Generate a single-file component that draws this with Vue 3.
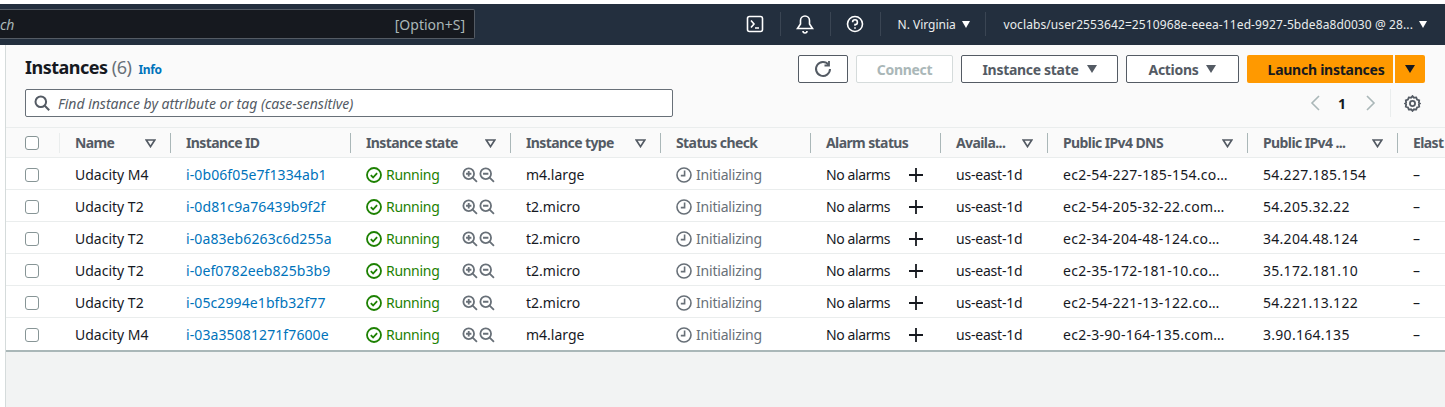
<script setup>
const columns = [
  { label: "Name", sort: true },
  { label: "Instance ID" },
  { label: "Instance state", sort: true },
  { label: "Instance type", sort: true },
  { label: "Status check" },
  { label: "Alarm status" },
  { label: "Availa...", sort: true },
  { label: "Public IPv4 DNS", sort: true },
  { label: "Public IPv4 ...", sort: true },
  { label: "Elast" },
];

const rows = [
  { name: "Udacity M4", id: "i-0b06f05e7f1334ab1", type: "m4.large", dns: "ec2-54-227-185-154.co…", ip: "54.227.185.154" },
  { name: "Udacity T2", id: "i-0d81c9a76439b9f2f", type: "t2.micro", dns: "ec2-54-205-32-22.com…", ip: "54.205.32.22" },
  { name: "Udacity T2", id: "i-0a83eb6263c6d255a", type: "t2.micro", dns: "ec2-34-204-48-124.co…", ip: "34.204.48.124" },
  { name: "Udacity T2", id: "i-0ef0782eeb825b3b9", type: "t2.micro", dns: "ec2-35-172-181-10.co…", ip: "35.172.181.10" },
  { name: "Udacity T2", id: "i-05c2994e1bfb32f77", type: "t2.micro", dns: "ec2-54-221-13-122.co…", ip: "54.221.13.122" },
  { name: "Udacity M4", id: "i-03a35081271f7600e", type: "m4.large", dns: "ec2-3-90-164-135.com…", ip: "3.90.164.135" },
];
</script>

<template>
  <div class="page">
    <header class="nav">
      <div class="search">
        <span class="search-text">ch</span>
        <span class="shortcut">[Option+S]</span>
      </div>
      <div class="nav-right">
        <span class="nav-icon">
          <svg width="18" height="18" viewBox="0 0 18 18" fill="none" stroke="#fff" stroke-width="1.6">
            <rect x="1.5" y="1.5" width="15" height="15" rx="2" />
            <path d="M5 5.5 8 9l-3 3.5M9 13h4" />
          </svg>
        </span>
        <span class="nav-icon">
          <svg width="18" height="20" viewBox="0 0 18 20" fill="none" stroke="#fff" stroke-width="1.6">
            <path d="M1.5 14.5h15L13.5 10V6.5a4.5 4.5 0 0 0-9 0V10zM7 17a2 2 0 0 0 4 0" />
          </svg>
        </span>
        <span class="nav-icon">
          <svg width="18" height="18" viewBox="0 0 18 18" fill="none" stroke="#fff" stroke-width="1.6">
            <circle cx="9" cy="9" r="7.5" />
            <path d="M6.6 7.2A2.4 2.4 0 1 1 9 9.6v1.2M9 12.2v1.6" />
          </svg>
        </span>
        <span class="region">N. Virginia <i class="tri tri-white"></i></span>
        <span class="account">voclabs/user2553642=2510968e-eeea-11ed-9927-5bde8a8d0030 @ 28... <i class="tri tri-white"></i></span>
      </div>
    </header>

    <main class="content">
      <section class="panel-head">
        <div class="head-top">
          <h1 class="title">Instances <span class="count">(6)</span><a class="info">Info</a></h1>
          <div class="actions">
            <button class="btn btn-icon">
              <svg width="18" height="18" viewBox="0 0 18 18" fill="none" stroke="#545b64" stroke-width="2">
                <path d="M14.5 4.6A7 7 0 1 0 16 9" />
                <path d="M15 1v4.5h-4.5" stroke-width="1.8" />
              </svg>
            </button>
            <button class="btn btn-disabled">Connect</button>
            <button class="btn btn-state">Instance state <i class="tri tri-gray"></i></button>
            <button class="btn btn-actions">Actions <i class="tri tri-gray"></i></button>
            <div class="launch">
              <button class="launch-main">Launch instances</button>
              <button class="launch-drop"><i class="tri tri-dark"></i></button>
            </div>
          </div>
        </div>
        <div class="head-bottom">
          <div class="filter">
            <svg width="16" height="16" viewBox="0 0 16 16" fill="none" stroke="#545b64" stroke-width="2">
              <circle cx="6.8" cy="6.8" r="5.3" />
              <path d="m10.8 10.8 4.4 4.4" />
            </svg>
            <span>Find instance by attribute or tag (case-sensitive)</span>
          </div>
          <div class="pager">
            <svg width="12" height="18" viewBox="0 0 12 18" fill="none" stroke="#aab7b8" stroke-width="1.6"><path d="M10 2 3 9l7 7" /></svg>
            <b>1</b>
            <svg class="next" width="12" height="18" viewBox="0 0 12 18" fill="none" stroke="#aab7b8" stroke-width="1.6"><path d="m2 2 7 7-7 7" /></svg>
            <span class="pager-sep"></span>
            <svg width="17" height="17" viewBox="0 0 16 16" fill="none" stroke="#545b64" stroke-width="1.7">
              <path d="m8 1 1.4 1.6 2.1-.3.8 2 2 .8-.3 2.1L15 8l-1 .8.3 2.1-2 .8-.8 2-2.1-.3L8 15l-1.4-1.6-2.1.3-.8-2-2-.8.3-2.1L1 8l1-.8-.3-2.1 2-.8.8-2 2.1.3z" />
              <circle cx="8" cy="8" r="2.4" />
            </svg>
          </div>
        </div>
      </section>

      <section class="table">
        <div class="row row-head">
          <div class="cell cell-check"><span class="checkbox"></span></div>
          <div v-for="col in columns" :key="col.label" class="cell cell-head">
            <span>{{ col.label }}</span>
            <svg v-if="col.sort" class="sort" width="11" height="9" viewBox="0 0 11 9" fill="none" stroke="#545b64" stroke-width="1.7"><path d="M1.2 1h8.6L5.5 7.6z" /></svg>
          </div>
        </div>
        <div v-for="row in rows" :key="row.id" class="row row-body">
          <div class="cell cell-check"><span class="checkbox"></span></div>
          <div class="cell">{{ row.name }}</div>
          <div class="cell link">{{ row.id }}</div>
          <div class="cell state">
            <svg width="16" height="16" viewBox="0 0 16 16" fill="none" stroke="#1d8102" stroke-width="1.8">
              <circle cx="8" cy="8" r="7" />
              <path d="m4.8 8.2 2.3 2.3 4-4.4" />
            </svg>
            <span class="running">Running</span>
            <span class="zoom">
              <svg width="16" height="16" viewBox="0 0 15 15" fill="none" stroke="#687078" stroke-width="1.7">
                <circle cx="6.3" cy="6.3" r="5" />
                <path d="m10 10 4 4M3.8 6.3h5M6.3 3.8v5" />
              </svg>
              <svg width="16" height="16" viewBox="0 0 15 15" fill="none" stroke="#687078" stroke-width="1.7">
                <circle cx="6.3" cy="6.3" r="5" />
                <path d="m10 10 4 4M3.8 6.3h5" />
              </svg>
            </span>
          </div>
          <div class="cell">{{ row.type }}</div>
          <div class="cell status">
            <svg width="16" height="16" viewBox="0 0 16 16" fill="none" stroke="#687078" stroke-width="1.6">
              <circle cx="8" cy="8" r="7" />
              <path d="M8.6 3.6v5H4.8" />
            </svg>
            <span class="status-text">Initializing</span>
          </div>
          <div class="cell alarm">
            <span class="alarm-text">No alarms</span>
            <svg width="16" height="16" viewBox="0 0 16 16" fill="none" stroke="#16191f" stroke-width="1.8"><path d="M8 1v14M1 8h14" /></svg>
          </div>
          <div class="cell zone">us-east-1d</div>
          <div class="cell wide">{{ row.dns }}</div>
          <div class="cell wide">{{ row.ip }}</div>
          <div class="cell">–</div>
        </div>
      </section>
      <div class="below"></div>
    </main>
  </div>
</template>

<style>
html,
body {
  margin: 0;
  background: #fff;
  overflow: hidden;
}
</style>

<style scoped>
.page {
  width: 1445px;
  height: 407px;
  overflow: hidden;
  font-family: "Noto Sans", "Open Sans", sans-serif;
  font-size: 14px;
  color: #16191f;
  padding-top: 4px;
  box-sizing: border-box;
  display: flex;
  flex-direction: column;
}
.nav {
  height: 41px;
  flex: none;
  background: #232f3e;
  display: flex;
  align-items: center;
  justify-content: space-between;
  box-sizing: border-box;
  padding-bottom: 1px;
}
.search {
  width: 475px;
  height: 30px;
  box-sizing: border-box;
  background: #16191f;
  border: 1px solid #545b64;
  border-left: 0;
  border-radius: 0 2px 2px 0;
  display: flex;
  align-items: center;
  justify-content: space-between;
  padding-right: 9px;
  color: #aab7b8;
  font-size: 14px;
}
.search-text {
  font-style: italic;
}
.nav-right {
  display: flex;
  align-items: center;
  color: #eaeded;
  font-size: 12px;
  height: 26px;
}
.nav-icon {
  width: 50px;
  height: 24px;
  box-sizing: border-box;
  border-right: 1px solid #3a4553;
  display: flex;
  justify-content: center;
  align-items: center;
}
.region {
  width: 105px;
  padding-left: 17px;
  box-sizing: border-box;
  border-right: 1px solid #3a4553;
  height: 24px;
  display: flex;
  align-items: center;
  gap: 6px;
  white-space: nowrap;
}
.account {
  padding: 0 18px;
  display: flex;
  align-items: center;
  gap: 6px;
  white-space: nowrap;
  letter-spacing: 0.1px;
}
.tri {
  display: inline-block;
  width: 0;
  height: 0;
  border-left: 5px solid transparent;
  border-right: 5px solid transparent;
  border-top: 8px solid #545b64;
}
.tri-white {
  border-top-color: #fff;
  border-left-width: 4.5px;
  border-right-width: 4.5px;
  border-top-width: 7px;
}
.tri-gray {
  border-top-color: #545b64;
  border-left-width: 5.5px;
  border-right-width: 5.5px;
  margin-left: 8px;
}
.tri-dark {
  border-top-color: #16191f;
  border-left-width: 5.5px;
  border-right-width: 5.5px;
}
.content {
  flex: 1;
  margin-left: 5px;
  border-left: 1px solid #d5dbdb;
  background: #f2f3f3;
  display: flex;
  flex-direction: column;
}
.panel-head {
  height: 82px;
  flex: none;
  box-sizing: border-box;
  background: #fafafa;
  padding: 10px 20px 0 19px;
}
.head-top {
  display: flex;
  justify-content: space-between;
  height: 30px;
}
.title {
  margin: 0;
  font-size: 18px;
  font-weight: 700;
  line-height: 24px;
  letter-spacing: -0.5px;
}
.count {
  font-weight: 400;
  color: #687078;
}
.info {
  margin-left: 7px;
  font-size: 12px;
  font-weight: 700;
  color: #0073bb;
  letter-spacing: -0.3px;
}
.actions {
  display: flex;
  gap: 8px;
}
.btn {
  height: 28px;
  box-sizing: border-box;
  background: #fff;
  border: 1px solid #545b64;
  border-radius: 2px;
  font: 700 14px "Noto Sans", sans-serif;
  letter-spacing: -0.3px;
  color: #545b64;
  padding: 0;
  display: flex;
  align-items: center;
  justify-content: center;
}
.btn-icon {
  width: 50px;
}
.btn-disabled {
  width: 97px;
  border-color: #d5dbdb;
  color: #aab7b8;
}
.btn-state {
  width: 157px;
}
.btn-actions {
  width: 113px;
}
.launch {
  display: flex;
  gap: 2px;
  height: 28px;
}
.launch-main,
.launch-drop {
  border: 0;
  background: #ff9900;
  color: #16191f;
  font: 700 14px "Noto Sans", sans-serif;
  letter-spacing: -0.25px;
  padding: 0;
  display: flex;
  align-items: center;
  justify-content: center;
}
.launch-main {
  width: 146px;
  padding-left: 12px;
  box-sizing: border-box;
  border-radius: 2px 0 0 2px;
}
.launch-drop {
  width: 30px;
  border-radius: 0 2px 2px 0;
}
.head-bottom {
  display: flex;
  justify-content: space-between;
  margin-top: 4px;
}
.filter {
  width: 648px;
  height: 28px;
  box-sizing: border-box;
  background: #fff;
  border: 1px solid #687078;
  border-radius: 2px;
  display: flex;
  align-items: center;
  gap: 8px;
  padding-left: 8px;
  font-style: italic;
  color: #545b64;
}
.pager {
  display: flex;
  align-items: center;
  height: 28px;
  gap: 17px;
  padding-right: 4px;
}
.pager b {
  font-weight: 700;
  font-size: 14px;
}
.pager .next {
  margin-left: 2px;
}
.pager-sep {
  width: 1px;
  height: 28px;
  background: #eaeded;
  margin: 0 -4px 0 -4px;
}
.table {
  flex: none;
  background: #fff;
  border-bottom: 2px solid #aab7b8;
  box-sizing: border-box;
  height: 225px;
}
.row {
  display: grid;
  grid-template-columns: 53px 111px 180px 160px 150px 150px 130px 107px 200px 150px 60px;
  height: 32px;
  box-sizing: border-box;
  border-bottom: 1px solid #eaeded;
  align-items: center;
}
.row-body {
  padding-top: 2px;
}
.row:last-child {
  border-bottom-color: transparent;
}
.row-head {
  height: 31px;
  background: #fafafa;
  border-top: 1px solid #eaeded;
  border-bottom: 1px solid #eaeded;
  color: #545b64;
  font-weight: 700;
  letter-spacing: -0.6px;
}
.cell {
  padding-left: 16px;
  white-space: nowrap;
  display: flex;
  align-items: center;
  box-sizing: border-box;
  overflow: hidden;
}
.cell-check {
  padding-left: 19px;
}
.cell-head {
  height: 20px;
  padding-left: 15px;
  border-left: 1px solid #aab7b8;
  position: relative;
}
.row-head .cell-check {
  height: 20px;
}
.row-head .cell-head:nth-child(2) {
  border-left-color: #eaeded;
}
.sort {
  position: absolute;
  right: 14px;
  top: 6px;
}
.checkbox {
  width: 14px;
  height: 14px;
  box-sizing: border-box;
  border: 1px solid #879596;
  border-radius: 3px;
  background: #fff;
  display: block;
}
.link {
  color: #0073bb;
  letter-spacing: 0.1px;
}
.running {
  color: #1d8102;
  margin-left: 4px;
  width: 76px;
  letter-spacing: -0.3px;
}
.zoom {
  display: flex;
  gap: 1px;
}
.status {
  color: #687078;
  gap: 4px;
}
.status-text {
  letter-spacing: -0.2px;
}
.alarm-text {
  width: 82px;
  letter-spacing: -0.4px;
}
.zone {
  letter-spacing: -0.2px;
}
.wide {
  letter-spacing: 0.28px;
}
.below {
  flex: 1;
  background: #f2f3f3;
}
</style>
